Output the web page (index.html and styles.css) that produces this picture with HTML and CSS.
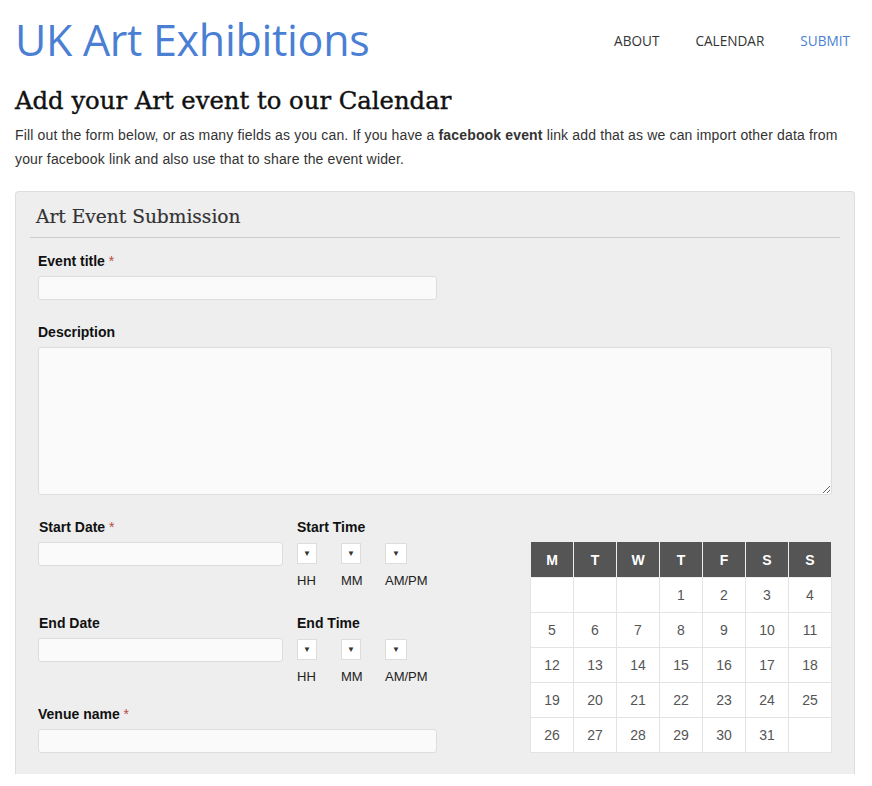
FILE: index.html
```html
<!DOCTYPE html>
<html lang="en">
<head>
  <meta charset="UTF-8">
  <title>UK Art Exhibitions - Submit</title>
  <link rel="stylesheet" href="styles.css">
</head>
<body>

  <header class="site-header">
    <a class="logo" href="#">UK Art Exhibitions</a>
    <nav class="nav">
      <a href="#">About</a>
      <a href="#">Calendar</a>
      <a href="#" class="active">Submit</a>
    </nav>
  </header>

  <main class="content">
    <h1 class="page-title">Add your Art event to our Calendar</h1>
    <p class="intro">Fill out the form below, or as many fields as you can. If you have a <strong>facebook event</strong> link add that as we can import other data from your facebook link and also use that to share the event wider.</p>

    <section class="panel">
      <h2 class="panel-title">Art Event Submission</h2>

      <form class="form">
        <div class="field">
          <label>Event title <span class="req">*</span></label>
          <input type="text" class="input wide">
        </div>

        <div class="field">
          <label>Description</label>
          <textarea class="input area"></textarea>
        </div>

        <div class="dates">
          <div class="dates-left">
            <div class="date-row">
              <div class="field date">
                <label>Start Date <span class="req">*</span></label>
                <input type="text" class="input">
              </div>
              <div class="field time">
                <label>Start Time</label>
                <div class="selects">
                  <div class="sel"><span class="box">▼</span><span>HH</span></div>
                  <div class="sel"><span class="box">▼</span><span>MM</span></div>
                  <div class="sel"><span class="box ampm">▼</span><span>AM/PM</span></div>
                </div>
              </div>
            </div>

            <div class="date-row">
              <div class="field date">
                <label>End Date</label>
                <input type="text" class="input">
              </div>
              <div class="field time">
                <label>End Time</label>
                <div class="selects">
                  <div class="sel"><span class="box">▼</span><span>HH</span></div>
                  <div class="sel"><span class="box">▼</span><span>MM</span></div>
                  <div class="sel"><span class="box ampm">▼</span><span>AM/PM</span></div>
                </div>
              </div>
            </div>

            <div class="field venue">
              <label>Venue name <span class="req">*</span></label>
              <input type="text" class="input wide">
            </div>
          </div>

          <table class="calendar">
            <thead>
              <tr><th>M</th><th>T</th><th>W</th><th>T</th><th>F</th><th>S</th><th>S</th></tr>
            </thead>
            <tbody>
              <tr><td></td><td></td><td></td><td>1</td><td>2</td><td>3</td><td>4</td></tr>
              <tr><td>5</td><td>6</td><td>7</td><td>8</td><td class="today">9</td><td>10</td><td>11</td></tr>
              <tr><td>12</td><td>13</td><td>14</td><td>15</td><td>16</td><td>17</td><td>18</td></tr>
              <tr><td>19</td><td>20</td><td>21</td><td>22</td><td>23</td><td>24</td><td>25</td></tr>
              <tr><td>26</td><td>27</td><td>28</td><td>29</td><td>30</td><td>31</td><td></td></tr>
            </tbody>
          </table>
        </div>
      </form>
    </section>
  </main>

</body>
</html>
```

FILE: styles.css
```css
body {
  margin: 0;
  padding: 0;
  font-family: 'Liberation Sans', Arial, sans-serif;
  font-size: 14px;
  color: #333;
  background: #fff;
}

.site-header {
  display: flex;
  justify-content: space-between;
  align-items: center;
  padding: 8px 22px 0 15px;
  height: 62px;
}

.logo {
  font-family: 'Open Sans', 'Noto Sans', sans-serif;
  font-size: 43px;
  color: #4a7fd4;
  text-decoration: none;
  letter-spacing: -0.3px;
}

.nav {
  display: flex;
  gap: 36px;
  margin-top: 2px;
}

.nav a {
  font-family: 'Open Sans', 'Noto Sans', sans-serif;
  font-size: 13.6px;
  text-transform: uppercase;
  color: #333;
  text-decoration: none;
}

.nav a.active {
  color: #4a7fd4;
}

.content {
  padding: 0 17px 0 15px;
}

.page-title {
  font-family: 'DejaVu Serif', 'Liberation Serif', serif;
  font-weight: normal;
  font-size: 24.3px;
  color: #111;
  -webkit-text-stroke: 0.4px #111;
  margin: 16px 0 8px;
}

.intro {
  line-height: 24px;
  letter-spacing: 0.15px;
  margin: 0 0 20px;
}

.panel {
  background: #eee;
  border: 1px solid #ddd;
  border-bottom: none;
  border-radius: 4px 4px 0 0;
  padding: 0 14px;
  height: 582px;
}

.panel-title {
  font-family: 'DejaVu Serif', 'Liberation Serif', serif;
  font-weight: normal;
  font-size: 18.6px;
  color: #333;
  -webkit-text-stroke: 0.2px #333;
  margin: 0;
  padding: 14px 6px 10px;
  border-bottom: 1px solid #ccc;
}

.form {
  padding: 13px 8px 0;
}

.field label {
  display: block;
  font-weight: bold;
  color: #111;
  line-height: 20px;
  margin-bottom: 5px;
}

.req {
  color: #b94a48;
  font-weight: normal;
}

.field {
  margin-bottom: 22px;
}

.input {
  display: block;
  box-sizing: border-box;
  height: 24px;
  background: #fafafa;
  border: 1px solid #ddd;
  border-radius: 3px;
  font: inherit;
}

.input.wide {
  width: 399px;
}

.input.area {
  width: 100%;
  height: 148px;
  resize: vertical;
}

.dates {
  display: flex;
  justify-content: space-between;
  margin-top: 10px;
}

.dates-left {
  width: 420px;
}

.date-row {
  display: flex;
  gap: 14px;
  margin-bottom: 3px;
}

.field.date {
  width: 245px;
}

.field.date .input {
  width: 245px;
}

.field.date label {
  margin-left: 1px;
}

.selects {
  display: flex;
  gap: 24px;
}

.sel {
  display: flex;
  flex-direction: column;
  gap: 9px;
  width: 20px;
  font-size: 13px;
  color: #222;
  white-space: nowrap;
}

.box {
  display: flex;
  align-items: center;
  justify-content: center;
  box-sizing: border-box;
  width: 20px;
  height: 21px;
  background: #fff;
  border: 1px solid #ddd;
  font-size: 8px;
  color: #333;
  margin-top: 1px;
}

.box.ampm {
  width: 22px;
}

.field.venue {
  margin-top: -5px;
}

.calendar {
  border-collapse: collapse;
  margin-top: 25px;
  align-self: flex-start;
  background: #fff;
}

.calendar th {
  background: #555;
  color: #fff;
  font-weight: bold;
  height: 35px;
  width: 42px;
  border: 1px solid #eee;
  border-top: none;
  padding: 0;
}

.calendar td {
  height: 34px;
  text-align: center;
  color: #555;
  border: 1px solid #e3e3e3;
  padding: 0;
}
```
